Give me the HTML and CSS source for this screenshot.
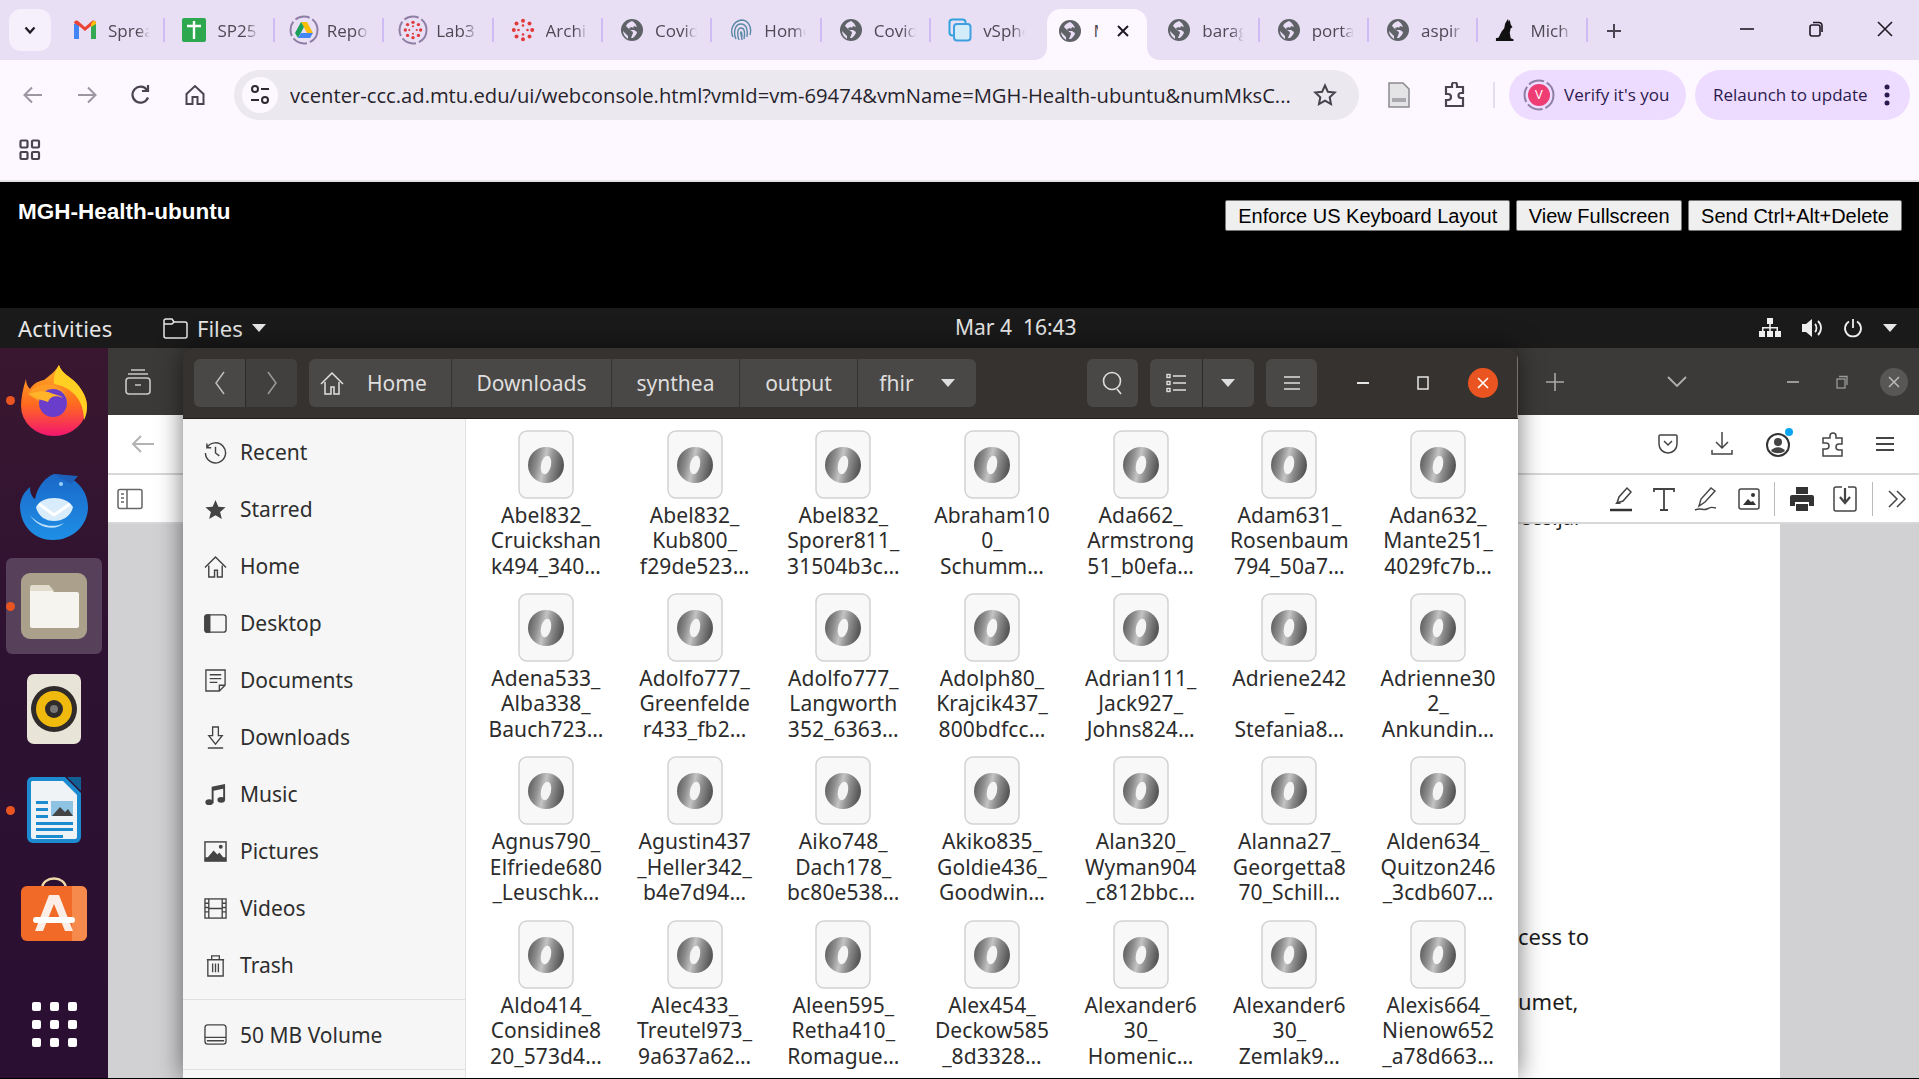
FILE: index.html
```html
<!DOCTYPE html>
<html lang="en">
<head>
<meta charset="utf-8">
<title>MGH-Health-ubuntu</title>
<link rel="stylesheet" href="styles.css">
</head>
<body>
<svg class="defs" xmlns="http://www.w3.org/2000/svg">
  <defs>
    <linearGradient id="ring" x1="0" y1="0.1" x2="1" y2="0.3">
      <stop offset="0" stop-color="#555"/><stop offset=".3" stop-color="#8e8e8e"/>
      <stop offset=".5" stop-color="#c4c4c4"/><stop offset=".72" stop-color="#8c8c8c"/><stop offset="1" stop-color="#575757"/>
    </linearGradient>
    <linearGradient id="fox" x1="0" y1="0" x2="0" y2="1">
      <stop offset="0" stop-color="#ffb224"/><stop offset=".55" stop-color="#ff6a1f"/><stop offset="1" stop-color="#f3156f"/>
    </linearGradient>
    <linearGradient id="bird" x1="0" y1="0" x2="0" y2="1">
      <stop offset="0" stop-color="#1a68c8"/><stop offset="1" stop-color="#1f8fe6"/>
    </linearGradient>
    <symbol id="json" viewBox="0 0 56 69">
      <rect x="1" y="1" width="54" height="67" rx="8" fill="#f8f8f8" stroke="#d2d2d2" stroke-width="1.5"/>
      <circle cx="28" cy="35" r="18" fill="url(#ring)"/>
      <ellipse cx="28" cy="35" rx="5" ry="9.500" fill="#f4f4f4" transform="rotate(12 28 35)"/>
    </symbol>
    <symbol id="globe" viewBox="0 0 24 24">
      <circle cx="12" cy="12" r="11" fill="#5f6368"/>
      <path fill="#e9def5" d="M12 3c-2 1-5 2-6 5l4 4c1 1 3 1 3 3l-2 5h2c2-2 4-4 4-6l-3-2h-4l-1-2 3-1 1 1 1-2 3 1c-1-3-3-5-5-6zM3 13l5 5v3c-3-2-5-5-5-8z"/>
    </symbol>
    <symbol id="canvas" viewBox="0 0 24 24">
      <g fill="#e03a3a">
        <circle cx="12" cy="2.8" r="2"/><circle cx="12" cy="21.2" r="2"/><circle cx="2.8" cy="12" r="2"/><circle cx="21.2" cy="12" r="2"/>
        <circle cx="5.5" cy="5.5" r="2"/><circle cx="18.5" cy="5.5" r="2"/><circle cx="5.5" cy="18.5" r="2"/><circle cx="18.5" cy="18.5" r="2"/>
        <circle cx="12" cy="7.5" r="1.3"/><circle cx="12" cy="16.5" r="1.3"/><circle cx="7.5" cy="12" r="1.3"/><circle cx="16.5" cy="12" r="1.3"/>
      </g>
    </symbol>
  </defs>
</svg>

<header class="tabstrip">
  <button class="tabs-menu"><svg width="14" height="14" viewBox="0 0 14 14"><path d="M2.5 4.5 7 9.5l4.5-5" fill="none" stroke="#1f1a24" stroke-width="2.2"/></svg></button>
  <div class="tab">
    <svg class="fav" viewBox="0 0 24 24"><path fill="#4285f4" d="M1 21V6l3-1 2 3v13z"/><path fill="#34a853" d="M18 21V8l2-3 3 1v15z"/><path fill="#ea4335" d="M6 8 1 5c0-2 2-3 4-2l7 6 7-6c2-1 4 0 4 2l-5 3-6 5z"/><path fill="#fbbc04" d="M20 3c2-1 3 1 3 3l-5 3V6z"/></svg>
    <span class="tab-label">Sprea</span>
  </div>
  <div class="tab">
    <svg class="fav" viewBox="0 0 24 24"><rect width="24" height="24" rx="2" fill="#2ea84f"/><path d="M12 3v18M5 8h14" stroke="#fff" stroke-width="2.4"/></svg>
    <span class="tab-label">SP25</span>
  </div>
  <div class="tab">
    <svg class="fav grouped" viewBox="0 0 30 30"><circle cx="15" cy="15" r="13.5" fill="none" stroke="#8e7fa5" stroke-width="2" stroke-dasharray="15 3"/><path fill="#fbbc04" d="M12 7h6l6 11h-6z"/><path fill="#1a9f5b" d="M12 7l-6 11 3 5 6-11z"/><path fill="#4285f4" d="M9 23h12l3-5H12z"/></svg>
    <span class="tab-label">Repo</span>
  </div>
  <div class="tab">
    <svg class="fav grouped" viewBox="0 0 30 30"><circle cx="15" cy="15" r="13.5" fill="none" stroke="#8e7fa5" stroke-width="2" stroke-dasharray="15 3"/><use href="#canvas" x="5" y="5" width="20" height="20"/></svg>
    <span class="tab-label">Lab3</span>
  </div>
  <div class="tab">
    <svg class="fav" viewBox="0 0 24 24"><use href="#canvas"/></svg>
    <span class="tab-label">Archi</span>
  </div>
  <div class="tab">
    <svg class="fav" viewBox="0 0 24 24"><use href="#globe"/></svg>
    <span class="tab-label">Covid</span>
  </div>
  <div class="tab">
    <svg class="fav" viewBox="0 0 24 24" fill="none" stroke="#5b88a5" stroke-width="1.4"><path d="M4 19C1 13 3 4 12 2c8 0 11 8 9 15M7 21C4 14 6 6 12 6c6 0 7 7 6 13M10 22c-2-5-2-12 2-12s4 6 3 11M13 22c0-3-2-8-1-8s1 3 1 5"/></svg>
    <span class="tab-label">Home</span>
  </div>
  <div class="tab">
    <svg class="fav" viewBox="0 0 24 24"><use href="#globe"/></svg>
    <span class="tab-label">Covid</span>
  </div>
  <div class="tab tab-nosep">
    <svg class="fav" viewBox="0 0 24 24" fill="none"><rect x="1.5" y="1.5" width="16" height="16" rx="3" stroke="#2fa3dc" stroke-width="2"/><rect x="6" y="6" width="16.500" height="16.500" rx="3" fill="#d2ecf9" stroke="#3f9fe0" stroke-width="2"/></svg>
    <span class="tab-label">vSphe</span>
  </div>
  <div class="tab tab-active">
    <svg class="fav" viewBox="0 0 24 24"><use href="#globe"/></svg>
    <span class="tab-label tab-label-short">M</span>
    <svg class="tab-x" width="14" height="14" viewBox="0 0 14 14"><path d="M2 2l10 10M12 2 2 12" stroke="#1f1a24" stroke-width="2"/></svg>
  </div>
  <div class="tab">
    <svg class="fav" viewBox="0 0 24 24"><use href="#globe"/></svg>
    <span class="tab-label">barag</span>
  </div>
  <div class="tab">
    <svg class="fav" viewBox="0 0 24 24"><use href="#globe"/></svg>
    <span class="tab-label">porta</span>
  </div>
  <div class="tab">
    <svg class="fav" viewBox="0 0 24 24"><use href="#globe"/></svg>
    <span class="tab-label">aspir</span>
  </div>
  <div class="tab">
    <svg class="fav" viewBox="0 0 26 26"><path fill="#111" d="M1 25v-3l3-1 3-6 3-4 1-5 3-5 1 3 1-2 1 5 2 3-2 1-1 5 1 6 3 1v2z"/></svg>
    <span class="tab-label">Mich</span>
  </div>
  <svg class="newtab" width="18" height="18" viewBox="0 0 18 18"><path d="M9 2v14M2 9h14" stroke="#4a4552" stroke-width="2"/></svg>
  <div class="winctl">
    <svg width="16" height="16" viewBox="0 0 16 16"><path d="M1 8h14" stroke="#1f1a24" stroke-width="1.6"/></svg>
    <svg width="16" height="16" viewBox="0 0 16 16" fill="none" stroke="#1f1a24" stroke-width="1.6"><rect x="2" y="4" width="10" height="11" rx="2"/><path d="M5 1.500h6a3 3 0 0 1 3 3V11"/></svg>
    <svg width="16" height="16" viewBox="0 0 16 16"><path d="M1 1l14 14M15 1 1 15" stroke="#1f1a24" stroke-width="1.6"/></svg>
  </div>
</header>

<section class="toolbar">
  <div class="nav-row">
    <div class="navbtn"><svg width="22" height="22" viewBox="0 0 22 22" fill="none" stroke="#9b97a0" stroke-width="2"><path d="M20 11H3M10 3.500 2.500 11l7.500 7.500"/></svg></div>
    <div class="navbtn"><svg width="22" height="22" viewBox="0 0 22 22" fill="none" stroke="#9b97a0" stroke-width="2"><path d="M2 11h17M12 3.500l7.500 7.500-7.500 7.500"/></svg></div>
    <div class="navbtn"><svg width="22" height="24" viewBox="0 0 22 24" fill="none" stroke="#48454e" stroke-width="2.200"><path d="M18 14.500A8 8 0 1 1 17 7"/><path d="M18 2v6h-6" /></svg></div>
    <div class="navbtn"><svg width="22" height="24" viewBox="0 0 22 24" fill="none" stroke="#48454e" stroke-width="2"><path d="M2.500 11 11 3l8.500 8v10h-6v-7h-5v7h-6z"/></svg></div>
    <div class="omnibox">
      <span class="siteinfo"><svg width="20" height="22" viewBox="0 0 20 22" fill="none" stroke="#2c2a30" stroke-width="2"><circle cx="5" cy="5" r="3"/><path d="M11 5h8M1 16h8"/><circle cx="15" cy="16" r="3"/></svg></span>
      <span class="url">vcenter-ccc.ad.mtu.edu/ui/webconsole.html?vmId=vm-69474&amp;vmName=MGH-Health-ubuntu&amp;numMksC...</span>
      <svg class="star" width="24" height="24" viewBox="0 0 24 24"><path d="M12 2.500l2.900 6.300 6.800.8-5 4.700 1.300 6.800-6-3.400-6 3.400 1.300-6.800-5-4.700 6.800-.8z" fill="none" stroke="#45424a" stroke-width="2"/></svg>
    </div>
    <div class="extbtn extbtn-first"><svg width="22" height="28" viewBox="0 0 22 28"><path d="M1 2h14l6 6v18H1z" fill="#e4e3e6" stroke="#8a8a8e" stroke-width="1.500"/><rect x="4" y="17" width="14" height="4" fill="#a9a9ad"/></svg></div>
    <div class="extbtn"><svg width="24" height="26" viewBox="0 0 24 26"><path d="M3 5h6V3a2.500 2.500 0 0 1 5 0v2h6v6h-2a2.500 2.500 0 0 0 0 5h2v8H3v-6h2a3 3 0 0 0 0-6H3z" fill="none" stroke="#48454e" stroke-width="2.200"/></svg></div>
    <span class="tool-sep"></span>
    <div class="pill pill-verify">
      <svg width="32" height="32" viewBox="0 0 32 32"><circle cx="16" cy="16" r="14.500" fill="none" stroke="#8e7fa5" stroke-width="2" stroke-dasharray="16 3"/><circle cx="16" cy="16" r="11" fill="#ee3d73"/></svg>
      <span class="avatar-v">V</span>
      <span>Verify it's you</span>
    </div>
    <div class="pill pill-relaunch">
      <span>Relaunch to update</span>
      <svg width="6" height="24" viewBox="0 0 6 24" fill="#2b1a4e"><circle cx="3" cy="4" r="2.500"/><circle cx="3" cy="12" r="2.500"/><circle cx="3" cy="20" r="2.500"/></svg>
    </div>
  </div>
  <div class="bookmarks">
    <svg width="22" height="22" viewBox="0 0 22 22" fill="none" stroke="#48454e" stroke-width="2.200"><rect x="1.500" y="1.500" width="7" height="7" rx="1"/><rect x="13" y="1.500" width="7" height="7" rx="1"/><rect x="1.500" y="13" width="7" height="7" rx="1"/><rect x="13" y="13" width="7" height="7" rx="1"/></svg>
  </div>
</section>

<section class="console-head">
  <h1 class="vm-title">MGH-Health-ubuntu</h1>
  <div class="console-btns">
    <button class="cbtn">Enforce US Keyboard Layout</button>
    <button class="cbtn cbtn-view">View Fullscreen</button>
    <button class="cbtn">Send Ctrl+Alt+Delete</button>
  </div>
</section>

<main class="vm">
  <div class="topbar">
    <span class="activities">Activities</span>
    <div class="appmenu">
      <svg width="25" height="21" viewBox="0 0 25 21" fill="none" stroke="#e6e6e6" stroke-width="1.500"><path d="M1 18V3a2 2 0 0 1 2-2h6l2 3h11a2 2 0 0 1 2 2v12a2 2 0 0 1-2 2H3a2 2 0 0 1-2-2zM1 6h8l2-2"/></svg>
      <span>Files</span>
      <i class="caret"></i>
    </div>
    <span class="clock">Mar 4&nbsp; 16:43</span>
    <div class="status">
      <svg width="22" height="20" viewBox="0 0 22 20" fill="#eee"><rect x="8" y="0" width="6" height="6"/><rect x="0" y="13" width="6" height="6"/><rect x="8" y="13" width="6" height="6"/><rect x="16" y="13" width="6" height="6"/><path d="M3 13V9h16v4h-1.500v-2.500h-5.700V13h-1.600v-2.500H4.500V13zM10.200 6h1.600v4h-1.600z"/></svg>
      <svg width="22" height="20" viewBox="0 0 22 20"><path d="M1 6h4l6-5v18l-6-5H1z" fill="#eee"/><path d="M14 6c2 2 2 6 0 8M17 3c4 4 4 10 0 14" fill="none" stroke="#eee" stroke-width="1.800"/></svg>
      <svg width="20" height="20" viewBox="0 0 20 20" fill="none" stroke="#eee" stroke-width="1.800"><path d="M6 3.500a8 8 0 1 0 8 0M10 1v9"/></svg>
      <i class="caret"></i>
    </div>
  </div>

  <div class="desktop">
    <nav class="dock">
      <div class="dock-item running">
        <svg width="70" height="72" viewBox="0 0 70 72"><path d="M40 1c2 7 8 10 14 15 9 8 14 18 14 26a33 30 0 0 1-66 0C2 34 4 24 7 15c0 5 2 8 4 10 3-5 8-8 14-9 5-4 11-8 15-15z" fill="url(#fox)"/><path d="M40 1c2 7 8 10 14 15 9 8 14 18 14 26 0 6-1 10-3 14 0-16-8-32-30-36-1-7 2-14 5-19z" fill="#ffcf23"/><path d="M9 30c6-9 19-12 30-7 8 4 11 13 8 21H33c-8-6-16-7-24-14z" fill="#ff9a24"/><circle cx="34" cy="39" r="14" fill="#6a3ecb"/><path d="M10 30c8-3 16-4 22-1 5 2 9 2 12 5-7-3-13-2-15 4-5-2-13-3-19-8z" fill="#ffb42a"/></svg>
      </div>
      <div class="dock-item">
        <svg width="72" height="70" viewBox="0 0 72 70"><path d="M36 3c18 0 34 14 34 33S54 69 35 69 2 55 2 34c1-7 4-13 10-18 0 6 2 10 5 12C20 14 28 6 36 3z" fill="url(#bird)"/><path d="M36 3l24 2-7 8z" fill="#1b5fb8"/><circle cx="43" cy="13" r="2" fill="#9bd0f5"/><path d="M18 36C24 24 48 24 55 36c-2 9-10 14-19 14-9 0-16-5-18-14z" fill="#d9ecfb"/><path d="M21 33l15 11 16-11" fill="none" stroke="#fff" stroke-width="3"/><path d="M12 44c8 10 22 14 34 8-8 8-26 6-34-8z" fill="#bfe2fa"/></svg>
      </div>
      <div class="dock-item dock-active running">
        <div class="files-tile"><svg width="50" height="44" viewBox="0 0 50 44"><path d="M2 3h18l5 5h23a2 2 0 0 1 2 2v32a2 2 0 0 1-2 2H3a2 2 0 0 1-2-2V4z" fill="#f6f4ef"/><path d="M1 4c0-2 1-3 2-3h17l5 6H1z" fill="#e2dccc"/></svg></div>
      </div>
      <div class="dock-item">
        <svg width="56" height="72" viewBox="0 0 56 72"><rect x="1" y="1" width="54" height="70" rx="7" fill="#e9e4d8"/><circle cx="28" cy="36" r="23" fill="#2e2b2a"/><circle cx="28" cy="36" r="18" fill="#f0b90e"/><circle cx="28" cy="36" r="9" fill="#2e2b2a"/><circle cx="28" cy="36" r="4" fill="#777"/></svg>
      </div>
      <div class="dock-item running">
        <svg width="56" height="68" viewBox="0 0 56 68"><path d="M6 1h33l16 16v44a6 6 0 0 1-6 6H7a6 6 0 0 1-6-6V6a5 5 0 0 1 5-5z" fill="#1d8bd0"/><path d="M6 5h31l14 14v42a2 2 0 0 1-2 2H7a2 2 0 0 1-2-2V6z" fill="#f0f3f6"/><path d="M41 1h14v14z" fill="#125f94"/><path d="M10 25h12v3H10zM10 32h12v3H10zM10 39h12v3H10zM10 46h37v3H10zM10 52h37v3H10zM10 59h27v3H10z" fill="#1d8bd0"/><rect x="25" y="25" width="22" height="15" fill="#8fc3e4"/><path d="M26 40l8-9 5 5 3-3 5 7z" fill="#444"/></svg>
      </div>
      <div class="dock-item">
        <svg width="68" height="64" viewBox="0 0 68 64"><path d="M22 12c0-14 24-14 24 0" fill="none" stroke="#efd9a8" stroke-width="2.500"/><rect x="1" y="9" width="66" height="55" rx="6" fill="#f26a28"/><path d="M52 9h9a6 6 0 0 1 6 6v43a6 6 0 0 1-6 6h-9z" fill="#f58a4c"/><path d="M15 54 29 18h10l14 36h-8L34 27 23 54z" fill="#fbeee6"/><rect x="13" y="40" width="42" height="6" rx="3" fill="#fff"/></svg>
      </div>
      <div class="dock-apps">
        <i></i><i></i><i></i><i></i><i></i><i></i><i></i><i></i><i></i>
      </div>
    </nav>

    <div class="workspace">
      <div class="backwin">
        <div class="fx-tabs">
          <svg class="fx-tabicon" width="26" height="26" viewBox="0 0 26 26" fill="none" stroke="#c8c8c8" stroke-width="1.600"><rect x="1" y="9" width="24" height="16" rx="3"/><path d="M3 5h20M6 1h14M10 16h6"/></svg>
          <div class="fx-right">
            <svg width="20" height="20" viewBox="0 0 20 20"><path d="M10 1v18M1 10h18" stroke="#a9a9a9" stroke-width="1.600"/></svg>
            <svg class="fx-chev" width="22" height="14" viewBox="0 0 22 14"><path d="M2 2l9 9 9-9" fill="none" stroke="#b0b0b0" stroke-width="1.800"/></svg>
            <svg class="fx-min" width="12" height="2" viewBox="0 0 12 2"><path d="M0 1h12" stroke="#9a9a9a" stroke-width="2"/></svg>
            <svg class="fx-max" width="12" height="14" viewBox="0 0 12 14" fill="none" stroke="#9a9a9a" stroke-width="1.300"><rect x="1" y="4" width="8" height="9"/><path d="M3 1.500h8V10"/></svg>
            <span class="fx-close"><svg width="12" height="12" viewBox="0 0 12 12"><path d="M1 1l10 10M11 1 1 11" stroke="#bbb" stroke-width="1.500"/></svg></span>
          </div>
        </div>
        <div class="fx-nav">
          <svg width="24" height="20" viewBox="0 0 24 20" fill="none" stroke="#b3b3b3" stroke-width="2"><path d="M23 10H2M10 2l-8 8 8 8"/></svg>
          <div class="fx-tools">
            <svg width="22" height="22" viewBox="0 0 22 22" fill="none" stroke="#444" stroke-width="1.500"><path d="M3 2h16a1 1 0 0 1 1 1v8a9 9 0 0 1-18 0V3a1 1 0 0 1 1-1zM7 8l4 4 4-4"/></svg>
            <svg width="26" height="26" viewBox="0 0 26 26" fill="none" stroke="#444" stroke-width="1.500"><path d="M13 1v15M7 11l6 6 6-6M3 19v4h20v-4"/></svg>
            <span class="fx-profile"><svg width="26" height="26" viewBox="0 0 26 26"><circle cx="13" cy="14" r="11" fill="none" stroke="#333" stroke-width="2"/><circle cx="13" cy="11" r="4" fill="#444"/><path d="M6 20c3-5 11-5 14 0-4 3-10 3-14 0z" fill="#444"/></svg><i class="fx-dot"></i></span>
            <svg width="24" height="26" viewBox="0 0 24 26" fill="none" stroke="#444" stroke-width="1.500"><path d="M2 7h7V5a3 3 0 0 1 6 0v2h6v6h-3a3 3 0 0 0 0 6h3v6H2v-7h3a3 3 0 0 0 0-6H2z"/></svg>
            <svg width="20" height="16" viewBox="0 0 20 16"><path d="M1 2h18M1 8h18M1 14h18" stroke="#444" stroke-width="1.800"/></svg>
          </div>
        </div>
        <div class="fx-pdfbar">
          <svg width="26" height="22" viewBox="0 0 26 22" fill="none" stroke="#666" stroke-width="1.500"><rect x="1" y="1.500" width="24" height="19" rx="2"/><path d="M10 1.500v19M4 6h3M4 10h3M4 14h3"/></svg>
          <div class="fx-tools fx-pdftools">
            <svg width="24" height="26" viewBox="0 0 24 26"><path d="M8 17l2-6 8-9 4 4-8 9z" fill="none" stroke="#444" stroke-width="1.500"/><path d="M6 18l3-3 3 3z" fill="#444"/><path d="M1 24h22" stroke="#333" stroke-width="2.500"/></svg>
            <svg width="22" height="24" viewBox="0 0 22 24"><path d="M1 5V2h20v3M11 2v21M7 23h8" fill="none" stroke="#444" stroke-width="1.800"/></svg>
            <svg width="24" height="26" viewBox="0 0 24 26" fill="none" stroke="#444" stroke-width="1.400"><path d="M5 20l2-7L17 2l4 3-10 11zM1 24c6-3 8 1 12-1s5-2 9-1"/></svg>
            <svg width="22" height="24" viewBox="0 0 22 24"><rect x="1" y="2" width="20" height="20" rx="2" fill="none" stroke="#444" stroke-width="1.500"/><path d="M5 18l5-6 3 3 2-1 3 4z" fill="#333"/><circle cx="15" cy="8" r="2" fill="#333"/></svg>
            <span class="fx-vsep"></span>
            <svg width="24" height="26" viewBox="0 0 24 26" fill="#333"><path d="M6 1h12v7H6zM2 9h20a2 2 0 0 1 2 2v9h-5v-4H5v4H0v-9a2 2 0 0 1 2-2zM6 18h12v7H6z"/></svg>
            <svg width="24" height="26" viewBox="0 0 24 26" fill="none" stroke="#444" stroke-width="1.500"><path d="M9 1H3a2 2 0 0 0-2 2v20a2 2 0 0 0 2 2h18a2 2 0 0 0 2-2V3a2 2 0 0 0-2-2h-6"/><path d="M12 2v13M7 11l5 6 5-6" stroke-width="2.200"/></svg>
            <span class="fx-vsep"></span>
            <svg width="20" height="20" viewBox="0 0 20 20" fill="none" stroke="#444" stroke-width="1.500"><path d="M2 2l8 8-8 8M10 2l8 8-8 8"/></svg>
          </div>
        </div>
        <div class="fx-content">
          <div class="pdfpage">
            <p class="pdf-top">ees.jar</p>
            <p class="pdf-a">cess to</p>
            <p class="pdf-b">umet,</p>
          </div>
        </div>
      </div>

      <div class="fileswin">
        <div class="fw-head">
          <div class="seg nav-seg">
            <span class="seg-cell seg-prev"><svg width="12" height="26" viewBox="0 0 12 26"><path d="M10 2 2 13l8 11" fill="none" stroke="#bdbdbd" stroke-width="1.500"/></svg></span>
            <span class="seg-cell seg-next"><svg width="12" height="26" viewBox="0 0 12 26"><path d="M2 2l8 11-8 11" fill="none" stroke="#9a9a9a" stroke-width="1.500"/></svg></span>
          </div>
          <div class="seg path">
            <span class="crumb crumb-home"><svg width="24" height="24" viewBox="0 0 24 24" fill="none" stroke="#e0e0e0" stroke-width="1.500"><path d="M1 13 12 2l11 11M5 11v12h6v-7h3v7h5V11"/></svg><span>Home</span></span>
            <span class="crumb crumb-dl">Downloads</span>
            <span class="crumb crumb-sy">synthea</span>
            <span class="crumb crumb-ou">output</span>
            <span class="crumb crumb-fh">fhir<i class="caret"></i></span>
          </div>
          <div class="fw-spacer"></div>
          <div class="seg seg-icon"><svg width="22" height="24" viewBox="0 0 22 24" fill="none" stroke="#dedede" stroke-width="1.600"><circle cx="10" cy="10" r="8.500"/><path d="M15 18l4 5"/></svg></div>
          <div class="seg view-seg">
            <span class="seg-cell"><svg width="20" height="20" viewBox="0 0 20 20" fill="none" stroke="#dedede" stroke-width="1.400"><path d="M7 3h13M7 10h13M7 17h13"/><rect x="1" y="1.500" width="3" height="3"/><rect x="1" y="8.500" width="3" height="3"/><rect x="1" y="15.500" width="3" height="3"/></svg></span>
            <span class="seg-cell"><i class="caret"></i></span>
          </div>
          <div class="seg seg-icon"><svg width="18" height="16" viewBox="0 0 18 16"><path d="M1 2h16M1 8h16M1 14h16" stroke="#dedede" stroke-width="1.500"/></svg></div>
          <div class="fw-ctl">
            <svg width="12" height="2" viewBox="0 0 12 2"><path d="M0 1h12" stroke="#e6e6e6" stroke-width="2"/></svg>
            <svg width="12" height="14" viewBox="0 0 12 14"><rect x="1" y="1" width="10" height="12" fill="none" stroke="#e6e6e6" stroke-width="1.500"/></svg>
            <span class="fw-close"><svg width="12" height="12" viewBox="0 0 12 12"><path d="M1 1l10 10M11 1 1 11" stroke="#fff" stroke-width="1.600"/></svg></span>
          </div>
        </div>
        <div class="fw-body">
          <aside class="sidebar">
            <ul class="places">
              <li><svg viewBox="0 0 24 24" fill="none" stroke="#444" stroke-width="1.500"><path d="M3 7a10.500 10.500 0 1 1-1.500 5.500M3 2.500V7h4.500M12 6v6.500l4 3"/></svg>Recent</li>
              <li><svg viewBox="0 0 24 24" fill="#444"><path d="M12 2l3 7 7.500.7-5.700 5 1.800 7.300L12 18l-6.600 4 1.800-7.300-5.700-5L9 9z"/></svg>Starred</li>
              <li><svg viewBox="0 0 24 24" fill="none" stroke="#444" stroke-width="1.500"><path d="M1 13 12 2l11 11M5 11v12h6v-7h3v7h5V11"/></svg>Home</li>
              <li><svg viewBox="0 0 24 24" fill="none" stroke="#444" stroke-width="1.500"><rect x="1" y="3" width="22" height="18" rx="2.500"/><path d="M1 5.500c0-1.500 1-2.500 2.500-2.500H6v18H3.500C2 21 1 20 1 18.500z" fill="#444"/></svg>Desktop</li>
              <li><svg viewBox="0 0 24 24" fill="none" stroke="#444" stroke-width="1.400"><path d="M2 1h20v16l-6 6H2zM6 6h12M6 10h12M6 14h8M16 23v-6h6"/></svg>Documents</li>
              <li><svg viewBox="0 0 24 24" fill="none" stroke="#444" stroke-width="1.400"><path d="M9 1h6v9h4l-7 9-7-9h4zM4 23h16"/></svg>Downloads</li>
              <li><svg viewBox="0 0 24 24"><path d="M8 4l14-3v17h-2V6L10 8v13H8z" fill="#444"/><ellipse cx="5.500" cy="20" rx="4" ry="3" fill="#444"/><ellipse cx="18" cy="17.500" rx="4" ry="3" fill="#444"/></svg>Music</li>
              <li><svg viewBox="0 0 24 24"><rect x="1" y="2" width="22" height="20" fill="none" stroke="#444" stroke-width="1.500"/><path d="M1 22v-4h22v4zM4 18l6-7 4 4 2-2 4 5z" fill="#444"/><circle cx="17.500" cy="7" r="2" fill="#444"/></svg>Pictures</li>
              <li><svg viewBox="0 0 24 24" fill="none" stroke="#444" stroke-width="1.400"><rect x="1" y="2" width="22" height="20"/><path d="M5 2v20M19 2v20M5 12h14M1 6.500h4M1 11h4M1 15.500h4M19 6.500h4M19 11h4M19 15.500h4"/></svg>Videos</li>
              <li><svg viewBox="0 0 24 24" fill="none" stroke="#444" stroke-width="1.400"><path d="M3 6h18M8 6V2h8v4M4 6v17h16V6M9 10v9M12 10v9M15 10v9"/></svg>Trash</li>
            </ul>
            <div class="volume"><svg viewBox="0 0 24 24" fill="none" stroke="#444" stroke-width="1.400"><rect x="1" y="2" width="22" height="20" rx="3"/><path d="M1 15h22M3 18.500h18"/></svg>50 MB Volume</div>
          </aside>
          <div class="filegrid">
            <figure class="file"><svg class="json"><use href="#json"/></svg><figcaption>Abel832_<br>Cruickshan<br>k494_340…</figcaption></figure>
            <figure class="file"><svg class="json"><use href="#json"/></svg><figcaption>Abel832_<br>Kub800_<br>f29de523…</figcaption></figure>
            <figure class="file"><svg class="json"><use href="#json"/></svg><figcaption>Abel832_<br>Sporer811_<br>31504b3c…</figcaption></figure>
            <figure class="file"><svg class="json"><use href="#json"/></svg><figcaption>Abraham10<br>0_<br>Schumm…</figcaption></figure>
            <figure class="file"><svg class="json"><use href="#json"/></svg><figcaption>Ada662_<br>Armstrong<br>51_b0efa…</figcaption></figure>
            <figure class="file"><svg class="json"><use href="#json"/></svg><figcaption>Adam631_<br>Rosenbaum<br>794_50a7…</figcaption></figure>
            <figure class="file"><svg class="json"><use href="#json"/></svg><figcaption>Adan632_<br>Mante251_<br>4029fc7b…</figcaption></figure>
            <figure class="file"><svg class="json"><use href="#json"/></svg><figcaption>Adena533_<br>Alba338_<br>Bauch723…</figcaption></figure>
            <figure class="file"><svg class="json"><use href="#json"/></svg><figcaption>Adolfo777_<br>Greenfelde<br>r433_fb2…</figcaption></figure>
            <figure class="file"><svg class="json"><use href="#json"/></svg><figcaption>Adolfo777_<br>Langworth<br>352_6363…</figcaption></figure>
            <figure class="file"><svg class="json"><use href="#json"/></svg><figcaption>Adolph80_<br>Krajcik437_<br>800bdfcc…</figcaption></figure>
            <figure class="file"><svg class="json"><use href="#json"/></svg><figcaption>Adrian111_<br>Jack927_<br>Johns824…</figcaption></figure>
            <figure class="file"><svg class="json"><use href="#json"/></svg><figcaption>Adriene242<br>_<br>Stefania8…</figcaption></figure>
            <figure class="file"><svg class="json"><use href="#json"/></svg><figcaption>Adrienne30<br>2_<br>Ankundin…</figcaption></figure>
            <figure class="file"><svg class="json"><use href="#json"/></svg><figcaption>Agnus790_<br>Elfriede680<br>_Leuschk…</figcaption></figure>
            <figure class="file"><svg class="json"><use href="#json"/></svg><figcaption>Agustin437<br>_Heller342_<br>b4e7d94…</figcaption></figure>
            <figure class="file"><svg class="json"><use href="#json"/></svg><figcaption>Aiko748_<br>Dach178_<br>bc80e538…</figcaption></figure>
            <figure class="file"><svg class="json"><use href="#json"/></svg><figcaption>Akiko835_<br>Goldie436_<br>Goodwin…</figcaption></figure>
            <figure class="file"><svg class="json"><use href="#json"/></svg><figcaption>Alan320_<br>Wyman904<br>_c812bbc…</figcaption></figure>
            <figure class="file"><svg class="json"><use href="#json"/></svg><figcaption>Alanna27_<br>Georgetta8<br>70_Schill…</figcaption></figure>
            <figure class="file"><svg class="json"><use href="#json"/></svg><figcaption>Alden634_<br>Quitzon246<br>_3cdb607…</figcaption></figure>
            <figure class="file"><svg class="json"><use href="#json"/></svg><figcaption>Aldo414_<br>Considine8<br>20_573d4…</figcaption></figure>
            <figure class="file"><svg class="json"><use href="#json"/></svg><figcaption>Alec433_<br>Treutel973_<br>9a637a62…</figcaption></figure>
            <figure class="file"><svg class="json"><use href="#json"/></svg><figcaption>Aleen595_<br>Retha410_<br>Romague…</figcaption></figure>
            <figure class="file"><svg class="json"><use href="#json"/></svg><figcaption>Alex454_<br>Deckow585<br>_8d3328…</figcaption></figure>
            <figure class="file"><svg class="json"><use href="#json"/></svg><figcaption>Alexander6<br>30_<br>Homenic…</figcaption></figure>
            <figure class="file"><svg class="json"><use href="#json"/></svg><figcaption>Alexander6<br>30_<br>Zemlak9…</figcaption></figure>
            <figure class="file"><svg class="json"><use href="#json"/></svg><figcaption>Alexis664_<br>Nienow652<br>_a78d663…</figcaption></figure>
          </div>
        </div>
      </div>
    </div>
  </div>
</main>
</body>
</html>
```

FILE: styles.css
```css
* { box-sizing: border-box; }
html, body { margin: 0; padding: 0; height: 100%; overflow: hidden; background: #000; }
body { width: 1919px; height: 1079px; font-family: "Open Sans", "Noto Sans", sans-serif; }
.defs { display: block; width: 0; height: 0; overflow: hidden; }
button { font: inherit; }
ul, figure, h1, p { margin: 0; padding: 0; }

/* Browser tab strip */
.tabstrip { height: 60px; background: #e9dff5; display: flex; align-items: stretch; padding-left: 9px; }
.tabs-menu { width: 42px; height: 42px; margin: 9px 5px 0 0; background: #f6f0fc; border: 0; border-radius: 12px; display: flex; align-items: center; justify-content: center; padding: 0; }
.tab { width: 109.4px; flex: none; display: flex; align-items: center; padding-left: 17px; position: relative; margin-top: 8px; height: 44px; }
.tab::after { content: ""; position: absolute; right: 0; top: 10px; height: 24px; width: 2px; background: #cdbcf5; }
.tab-nosep::after { display: none; }
.fav { width: 24px; height: 24px; flex: none; }
.fav.grouped { width: 30px; height: 30px; margin: 0 -3px; }
.tab-label { margin-left: 11px; width: 42px; overflow: hidden; white-space: nowrap; font-size: 17px; color: #4e4a55; -webkit-mask-image: linear-gradient(90deg, #000 70%, transparent); mask-image: linear-gradient(90deg, #000 70%, transparent); }
.tab-active { background: #fdf7ff; border-radius: 14px 14px 0 0; height: 51px; margin-top: 9px; padding-left: 11px; padding-bottom: 8px; width: 100px; margin-left: 6px; margin-right: 3.800px; }
.tab-active::before, .tab-active::after { content: ""; position: absolute; bottom: 0; top: auto; width: 12px; height: 12px; background: radial-gradient(circle at 0 0, transparent 11.500px, #fdf7ff 12px); }
.tab-active::before { left: -12px; }
.tab-active::after { right: -12px; background: radial-gradient(circle at 100% 0, transparent 11.500px, #fdf7ff 12px); }
.tab-label-short { width: 4px; margin-left: 12px; -webkit-mask-image: none; mask-image: none; }
.tab-x { margin-left: 18px; }
.newtab { align-self: center; margin-left: 17px; margin-top: 2px; }
.winctl { margin-left: auto; display: flex; align-items: center; justify-content: flex-end; gap: 53px; padding: 0 26px 0 0; margin-top: -2px; }

/* Browser toolbar */
.toolbar { height: 122px; background: #fdf7ff; border-bottom: 2px solid #e4e0e6; padding-top: 9px; }
.nav-row { display: flex; align-items: center; height: 51px; padding-left: 6px; }
.navbtn { width: 54px; display: flex; justify-content: center; flex: none; }
.omnibox { width: 1125px; height: 50px; margin-left: 12px; background: #ece8f0; border-radius: 25px; display: flex; align-items: center; padding: 0 22px 0 8px; flex: none; }
.siteinfo { width: 36px; height: 36px; border-radius: 50%; background: #fdf7ff; display: flex; align-items: center; justify-content: center; flex: none; }
.url { margin-left: 12px; font-size: 20.200px; color: #26232b; white-space: nowrap; flex: 1; overflow: hidden; }
.star { flex: none; }
.extbtn { width: 56px; flex: none; display: flex; justify-content: center; }
.extbtn-first { margin-left: 12px; }
.tool-sep { width: 2px; height: 26px; background: #e4dcef; margin: 0 14px 0 10px; flex: none; }
.pill { height: 50px; border-radius: 25px; background: #eddcff; display: flex; align-items: center; font-size: 17px; color: #2b1a4e; flex: none; position: relative; }
.pill-verify { width: 177px; padding-left: 14px; gap: 9px; }
.avatar-v { position: absolute; left: 26px; top: 15px; font-size: 13px; color: #fff; }
.pill-relaunch { width: 215px; margin-left: 9px; padding: 0 20px 0 18px; justify-content: space-between; }
.bookmarks { height: 60px; padding: 19px 0 0 19px; }
.bookmarks svg { display: block; }

/* Console header */
.console-head { height: 126px; background: #000; display: flex; justify-content: space-between; padding: 18px 17px 0 18px; }
.vm-title { font: bold 22.500px/26px "Liberation Sans", Arial, sans-serif; color: #fff; margin-top: -1px; }
.console-btns { display: flex; gap: 6px; align-items: flex-start; }
.cbtn { height: 31px; padding: 0 12px; background: #efefef; border: 1px solid #767676; border-radius: 2px; font: 20px/1 "Liberation Sans", Arial, sans-serif; color: #000; white-space: nowrap; }
.cbtn-view { padding: 0 11.500px; min-width: 165px; }

/* VM screen */
.vm { height: 771px; border-bottom: 1px solid #000; overflow: hidden; font-family: "Noto Sans", "Open Sans", sans-serif; display: flex; flex-direction: column; }
.topbar { height: 40px; flex: none; background: #1a1a1a; color: #e6e6e6; display: flex; align-items: center; font-size: 22px; position: relative; padding-left: 18px; }
.activities { width: 145px; letter-spacing: .3px; }
.appmenu { display: flex; align-items: center; gap: 9px; }
.clock { position: absolute; left: 955px; top: 5px; line-height: 28px; white-space: nowrap; font-size: 21px; }
.status { margin-left: auto; width: 138px; margin-right: 22px; display: flex; align-items: center; justify-content: space-between; }
.caret { display: inline-block; width: 0; height: 0; border: 7px solid transparent; border-top: 8px solid currentColor; border-bottom: 0; }

.desktop { flex: 1; display: flex; min-height: 0; }
.dock { width: 108px; flex: none; background: linear-gradient(180deg, #3a1730 0, #2e1231 40%, #2a0f33 100%); display: flex; flex-direction: column; align-items: center; padding-top: 12px; position: relative; }
.dock-item { width: 96px; height: 102px; margin-left: 6px; margin-right: 6px; display: flex; align-items: center; justify-content: center; flex: none; position: relative; }
.dock-item:nth-child(1) { height: 80px; margin-bottom: 26px; }
.dock-item:nth-child(2) { height: 80px; margin-bottom: 12px; }
.dock-item:nth-child(3) { height: 96px; margin-bottom: 19px; }
.dock-item:nth-child(4) { height: 72px; margin-bottom: 31px; }
.dock-item:nth-child(5) { height: 68px; margin-bottom: 33px; }
.dock-item:nth-child(6) { height: 64px; margin-bottom: 0; }
.dock-active { background: #57405a; border-radius: 6px; }
.running::before { content: ""; position: absolute; left: 0; top: 50%; width: 9px; height: 9px; margin: -4px 0 0 0; border-radius: 50%; background: #e95420; }
.files-tile { width: 66px; height: 66px; background: #aaa08c; border-radius: 9px; display: flex; align-items: center; justify-content: center; }
.dock-apps { display: grid; grid-template-columns: repeat(3, 9px); gap: 9px; margin-top: 61px; }
.dock-apps i { width: 9px; height: 9px; background: #fff; border-radius: 2px; }

.workspace { flex: 1; position: relative; min-width: 0; }
.backwin { height: 100%; display: flex; flex-direction: column; background: #d1d1d4; }
.fx-tabs { height: 67px; flex: none; background: #3b3a38; display: flex; align-items: center; padding: 0 11px 0 17px; }
.fx-right { margin-left: auto; display: flex; align-items: center; }
.fx-chev { margin-left: 101px; }
.fx-min { margin-left: 99px; }
.fx-max { margin-left: 37px; }
.fx-close { width: 28px; height: 28px; margin-left: 32px; border-radius: 50%; background: #585755; display: flex; align-items: center; justify-content: center; }
.fx-nav { height: 60px; flex: none; background: #fff; border-bottom: 2px solid #d8d8d8; display: flex; align-items: center; padding: 0 24px 0 23px; }
.fx-tools { margin-left: auto; display: flex; align-items: center; gap: 30px; }
.fx-profile { position: relative; display: flex; }
.fx-dot { position: absolute; right: -2px; top: -3px; width: 8px; height: 8px; border-radius: 50%; background: #0aa5f5; }
.fx-pdfbar { height: 49px; flex: none; background: #fff; border-bottom: 2px solid #d8d8d8; display: flex; align-items: center; padding: 0 12px 0 9px; }
.fx-pdftools { gap: 19.500px; }
.fx-vsep { width: 1px; height: 34px; background: #bbb; margin: 0 -5px; }
.fx-content { flex: 1; min-height: 0; }
.pdfpage { width: 1672px; height: 100%; background: linear-gradient(90deg, #d1d1d4 0, #d1d1d4 75px, #fff 75px); position: relative; overflow: hidden; font-size: 22px; color: #1d1d1d; }
.pdf-top { position: absolute; left: 1412px; top: -20px; font-size: 20px; }
.pdf-a { position: absolute; left: 1410px; top: 397px; }
.pdf-b { position: absolute; left: 1410px; top: 462px; }

/* Nautilus window */
.fileswin { position: absolute; left: 75px; top: 0; bottom: 0; width: 1335px; display: flex; flex-direction: column; border-radius: 12px 12px 0 0; box-shadow: 0 0 26px rgba(0,0,0,.55); overflow: hidden; }
.fw-head { height: 71px; flex: none; background: #353230; border-bottom: 1px solid #1f1d1c; display: flex; align-items: center; padding-left: 11px; color: #dedede; font-size: 21px; box-shadow: inset -1px 0 0 #77736f; }
.seg { height: 48px; background: #4a4846; border-radius: 6px; display: flex; align-items: stretch; flex: none; }
.seg-cell { display: flex; align-items: center; justify-content: center; }
.seg-cell + .seg-cell { border-left: 1px solid #2d2b2a; }
.nav-seg { width: 103px; }
.nav-seg .seg-cell { flex: 1; }
.seg-next { background: #41403e; border-radius: 0 6px 6px 0; }
.path { margin-left: 12px; width: 667px; }
.crumb { display: flex; align-items: center; justify-content: center; border-left: 1px solid #333; white-space: nowrap; }
.crumb-home { width: 142px; border-left: 0; gap: 23px; padding-left: 11px; justify-content: flex-start; }
.crumb-dl { width: 160px; }
.crumb-sy { width: 128px; }
.crumb-ou { width: 118px; }
.crumb-fh { width: 119px; gap: 27px; }
.fw-spacer { width: 111px; flex: none; }
.seg-icon { width: 51px; align-items: center; justify-content: center; }
.view-seg { width: 104px; margin-left: 12px; margin-right: 12px; }
.view-seg .seg-cell { flex: 1; }
.fw-ctl { display: flex; align-items: center; margin-left: 40px; }
.fw-ctl svg:nth-child(2) { margin-left: 48px; }
.fw-close { width: 30px; height: 30px; margin-left: 39px; border-radius: 50%; background: #e95420; display: flex; align-items: center; justify-content: center; }
.fw-body { flex: 1; display: flex; min-height: 0; background: #fff; }
.sidebar { width: 283px; flex: none; background: #f6f6f6; border-right: 1px solid #e2e2e2; color: #2e2e2e; font-size: 21px; }
.places { list-style: none; padding: 4.500px 0 0; border-bottom: 1px solid #e0e0e0; height: 581px; }
.places li, .volume { height: 57px; display: flex; align-items: center; gap: 13px; padding-left: 21px; }
.places svg, .volume svg { width: 23px; height: 23px; flex: none; }
.volume { height: 70px; border-bottom: 1px solid #e0e0e0; }
.filegrid { flex: 1; display: grid; grid-template-columns: repeat(7, 148.700px); grid-auto-rows: 163.400px; padding: 10.500px 0 0 5.600px; align-content: start; }
.file { display: flex; flex-direction: column; align-items: center; }
.json { width: 56px; height: 69px; flex: none; display: block; }
.file figcaption { margin-top: 4px; text-align: center; font-size: 21px; letter-spacing: .1px; line-height: 25.500px; color: #2c2c2c; white-space: nowrap; }
```
